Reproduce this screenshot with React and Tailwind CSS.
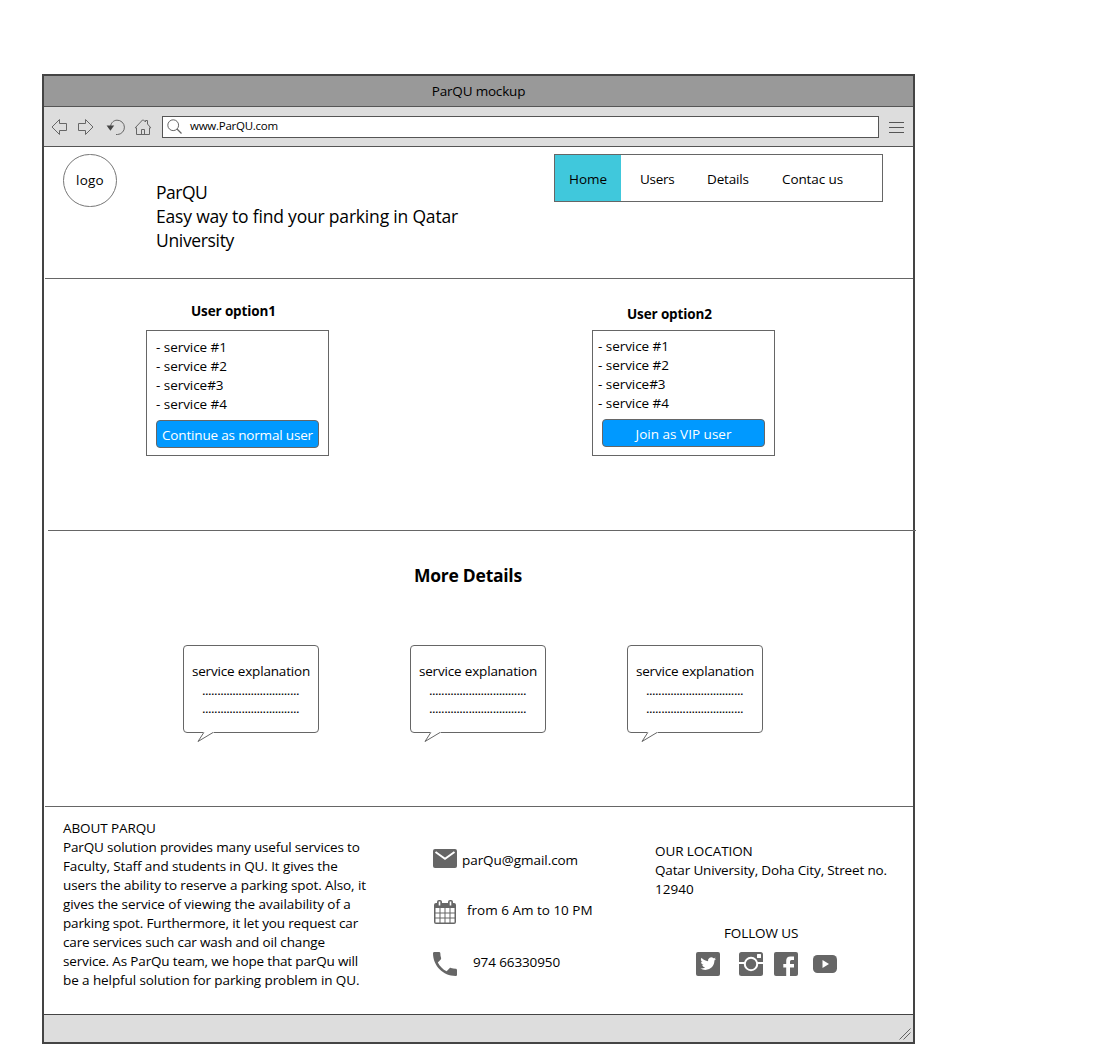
import React from "react";

const stroke = { fill: "none", stroke: "#666", strokeWidth: 1 };

function ToolbarIcons() {
  return (
    <div className="flex h-[18px] w-[118px] shrink-0 items-center">
      <svg className="ml-[7px] h-[18px] w-[18px] shrink-0" viewBox="0 0 18 18" {...stroke}>
        <path d="M1 9 L8.5 1.5 V5.5 H15.5 V12.5 H8.5 V16.5 Z" />
      </svg>
      <svg className="ml-[8px] h-[18px] w-[18px] shrink-0" viewBox="0 0 18 18" {...stroke}>
        <path d="M16 9 L8.5 1.5 V5.5 H1.5 V12.5 H8.5 V16.5 Z" />
      </svg>
      <svg className="ml-[11px] h-[18px] w-[20px] shrink-0" viewBox="0 0 20 18" {...stroke}>
        <path d="M4.5 8.5 C5 4.5 8 2.2 11 2.2 A7 7 0 0 1 11.5 16.5 H10" />
        <path d="M0.6 7.6 H8.2 L4.4 12.8 Z" fill="#444" stroke="none" />
      </svg>
      <svg className="ml-[8px] h-[18px] w-[18px] shrink-0" viewBox="0 0 18 18" {...stroke}>
        <path d="M1.2 9.8 L8.5 2 L9.5 2 L11.5 4 V2.5 H13.5 V6 L16.8 9.8 H15.5 V16.5 H2.5 V9.8 Z M7.5 16.5 V11.5 H10.5 V16.5" />
      </svg>
    </div>
  );
}

function OptionBox({ services, label, spacing, padding }) {
  return (
    <div className={"h-[126px] w-[183px] border border-[#666] " + padding}>
      <ul className="whitespace-pre leading-[19px] tracking-[-0.05px]">
        {services.map((s) => (
          <li key={s}>{s}</li>
        ))}
      </ul>
      <button
        className={
          "ml-auto mr-[9px] mt-[6px] block h-[28px] w-[163px] whitespace-nowrap rounded border border-[#666] bg-[#0099ff] pt-px text-center leading-[26px] text-white " +
          spacing
        }
      >
        {label}
      </button>
    </div>
  );
}

function Bubble({ margin }) {
  return (
    <div className={"relative h-[88px] w-[136px] rounded border border-[#666] pt-[16px] text-center " + margin}>
      <p className="whitespace-nowrap leading-[18px] tracking-[-0.17px]">service explanation</p>
      <p className="mt-px pr-px leading-[18px] tracking-[-0.515px]">................................</p>
      <p className="pr-px leading-[18px] tracking-[-0.515px]">................................</p>
      <svg className="absolute left-[13px] top-[85px] h-[12px] w-[18px]" viewBox="0 0 18 12">
        <path d="M6.5 0 H16.5 V2 H6.5 Z" fill="#fff" />
        <path d="M6.8 1.5 L1 10.5 L16 1.5" fill="#fff" stroke="#666" />
      </svg>
    </div>
  );
}

function MailIcon() {
  return (
    <svg className="h-[19px] w-6 shrink-0" viewBox="0 0 24 19">
      <rect width="24" height="19" rx="2" fill="#666" />
      <path d="M2.5 3 L12 9.8 L21.5 3" fill="none" stroke="#fff" strokeWidth="2" />
    </svg>
  );
}

function CalendarIcon() {
  return (
    <svg className="h-6 w-6 shrink-0" viewBox="0 0 24 24">
      <path d="M3 3 H21 Q23 3 23 5 V22 Q23 24 21 24 H3 Q1 24 1 22 V5 Q1 3 3 3 Z" fill="#666" />
      <rect x="4" y="0" width="5" height="7" rx="2" fill="#666" />
      <rect x="15" y="0" width="5" height="7" rx="2" fill="#666" />
      <path d="M6.5 1.5 V5.5 M17.5 1.5 V5.5" stroke="#fff" strokeWidth="1.6" />
      <path
        d="M2.5 8 h4 v4.5 h-4z M7.5 8 h4 v4.5 h-4z M12.5 8 h4 v4.5 h-4z M17.5 8 h4 v4.5 h-4z M2.5 13.5 h4 v4 h-4z M7.5 13.5 h4 v4 h-4z M12.5 13.5 h4 v4 h-4z M17.5 13.5 h4 v4 h-4z M2.5 18.5 h4 v4 h-4z M7.5 18.5 h4 v4 h-4z M12.5 18.5 h4 v4 h-4z M17.5 18.5 h4 v4 h-4z"
        fill="#fff"
      />
    </svg>
  );
}

function PhoneIcon() {
  return (
    <svg className="h-6 w-6 shrink-0" viewBox="3 3 18 18" fill="#666">
      <path d="M6.62 10.79c1.44 2.83 3.76 5.14 6.59 6.59l2.2-2.2c.27-.27.67-.36 1.02-.24 1.12.37 2.33.57 3.57.57.55 0 1 .45 1 1V20c0 .55-.45 1-1 1-9.39 0-17-7.61-17-17 0-.55.45-1 1-1h3.5c.55 0 1 .45 1 1 0 1.25.2 2.45.57 3.57.11.35.03.74-.25 1.02l-2.2 2.2z" />
    </svg>
  );
}

function SocialIcons() {
  return (
    <div className="ml-[41px] mt-[9px] flex items-center">
      <svg className="h-6 w-6" viewBox="0 0 24 24">
        <rect width="24" height="24" rx="2" fill="#666" />
        <g transform="translate(4.4 3.8) scale(0.65)">
          <path
            fill="#fff"
            d="M23.95 4.57a10 10 0 0 1-2.82.77 4.96 4.96 0 0 0 2.16-2.72c-.95.55-2 .95-3.13 1.18a4.92 4.92 0 0 0-8.38 4.48C7.69 8.1 4.07 6.13 1.64 3.16a4.92 4.92 0 0 0 1.52 6.57 4.9 4.9 0 0 1-2.23-.61v.06a4.92 4.92 0 0 0 3.95 4.83 5 5 0 0 1-2.21.08 4.94 4.94 0 0 0 4.6 3.42A9.87 9.87 0 0 1 0 19.54a13.99 13.99 0 0 0 7.55 2.21c9.05 0 14-7.5 14-13.98 0-.21 0-.42-.02-.63a9.94 9.94 0 0 0 2.42-2.57z"
          />
        </g>
      </svg>
      <svg className="ml-[19px] h-6 w-6" viewBox="0 0 24 24">
        <rect width="24" height="24" rx="2.5" fill="#666" />
        <path d="M0 11 H6 M18 11 H24" stroke="#fff" strokeWidth="2" />
        <circle cx="12" cy="12" r="6.2" fill="#666" stroke="#fff" strokeWidth="2" />
        <rect x="18" y="2" width="4" height="4" rx="0.5" fill="#fff" />
      </svg>
      <svg className="ml-[11px] h-6 w-6" viewBox="0 0 24 24">
        <rect width="24" height="24" rx="2" fill="#666" />
        <path d="M20 4.5 V8 H17.5 Q16 8 16 9.5 V12 H20 V15.5 H16 V24 H12.2 V15.5 H9.3 V12 H12.2 V8.8 Q12.2 4.5 16.5 4.5 Z" fill="#fff" />
      </svg>
      <svg className="ml-[15px] h-[18px] w-6" viewBox="0 0 24 18">
        <rect width="24" height="18" rx="4.5" fill="#666" />
        <path d="M9.5 5 L16 9 L9.5 13 Z" fill="#fff" />
      </svg>
    </div>
  );
}

const about = [
  ["ABOUT PARQU", "tracking-[-0.1px]"],
  ["ParQU solution provides many useful services to", "tracking-[-0.165px]"],
  ["Faculty, Staff and students in QU. It gives the", "tracking-[-0.11px]"],
  ["users the ability to reserve a parking spot. Also, it", "tracking-[-0.1px]"],
  ["gives the service of viewing the availability of a", "tracking-[-0.06px]"],
  ["parking spot. Furthermore, it let you request car", "tracking-[-0.15px]"],
  ["care services such car wash and oil change", "tracking-[-0.14px]"],
  ["service. As ParQu team, we hope that parQu will", "tracking-[-0.16px]"],
  ["be a helpful solution for parking problem in QU.", "tracking-[-0.09px]"],
];

export default function App() {
  return (
    <div className="h-[1044px] w-[1100px] overflow-hidden bg-white pl-[42px] pt-[74px] font-['Open_Sans',sans-serif] text-[13.5px] text-black">
      <div className="flex h-[970px] w-[873px] flex-col border-2 border-[#444]">
        <div className="h-[31px] shrink-0 border-b border-[#555] bg-[#999] text-center leading-[30px] tracking-[-0.19px]">
          ParQU mockup
        </div>

        <div className="flex h-[40px] shrink-0 items-center border-b border-[#555] bg-[#ddd] pt-px">
          <ToolbarIcons />
          <div className="flex h-[22px] w-[717px] items-center border border-[#555] bg-white">
            <svg className="ml-[4px] h-4 w-4" viewBox="0 0 16 16" {...stroke}>
              <circle cx="6.2" cy="6.2" r="5.4" />
              <path d="M10 10 L14.5 14.5" strokeWidth="1.3" />
            </svg>
            <span className="ml-[7px] pb-[2px] text-[11.5px] leading-[16px] tracking-[-0.25px]">www.ParQU.com</span>
          </div>
          <div className="ml-[10px] flex w-[15px] flex-col gap-[4px]">
            <span className="h-px bg-[#555]" />
            <span className="h-px bg-[#555]" />
            <span className="h-px bg-[#555]" />
          </div>
        </div>

        <header className="ml-px flex h-[132px] shrink-0 border-b border-[#666]">
          <div className="ml-[18px] mt-[7px] h-[53px] w-[54px] rounded-full border border-[#777] text-center leading-[50px] tracking-[0.2px]">
            logo
          </div>
          <div className="ml-[39px] mt-[33px] w-[398px] whitespace-nowrap text-[17.5px] leading-[24px]">
            <h1 className="tracking-[-0.5px]">ParQU</h1>
            <p className="tracking-[-0.19px]">Easy way to find your parking in Qatar</p>
            <p className="tracking-[-0.34px]">University</p>
          </div>
          <nav className="mt-[7px] flex h-[48px] w-[329px] whitespace-nowrap border border-[#666] leading-[49px]">
            <a className="w-[66px] bg-[#40c8dc] text-center">Home</a>
            <a className="ml-[19px] w-[67px] tracking-[-0.3px]">Users</a>
            <a className="w-[75px] tracking-[-0.15px]">Details</a>
            <a className="tracking-[-0.1px]">Contac us</a>
          </nav>
        </header>

        <section className="flex h-[251px] shrink-0 pl-[102px]">
          <div className="w-[446px]">
            <h2 className="mt-[23px] pl-[45px] font-bold leading-[19px] tracking-[-0.13px]">User option1</h2>
            <div className="mt-[9px]">
              <OptionBox
                services={["- service #1", "- service #2", "- service#3", "- service #4"]}
                label="Continue as normal user"
                spacing="tracking-[-0.17px]"
                padding="pt-[7px] pl-[9px]"
              />
            </div>
          </div>
          <div>
            <h2 className="mt-[26px] pl-[35px] font-bold leading-[19px] tracking-[-0.13px]">User option2</h2>
            <div className="mt-[6px]">
              <OptionBox
                services={["- service #1", "- service #2", "- service#3", "- service #4"]}
                label="Join as VIP user"
                spacing="tracking-[0.02px]"
                padding="pt-[6px] pl-[5px]"
              />
            </div>
          </div>
        </section>

        <section className="-mr-[3px] ml-[4px] h-[276px] shrink-0 border-t border-[#666]">
          <h2 className="ml-[366px] mt-[32px] text-[17.5px] font-bold leading-[24px] tracking-[-0.26px]">More Details</h2>
          <div className="mt-[58px] flex pl-[135px]">
            <Bubble margin="" />
            <Bubble margin="ml-[91px]" />
            <Bubble margin="ml-[81px]" />
          </div>
        </section>

        <footer className="ml-px flex h-[208px] shrink-0 whitespace-nowrap border-t border-[#666] leading-[19px]">
          <div className="ml-[18px] mt-[12px] w-[370px]">
            {about.map(([line, spacing]) => (
              <p key={line} className={spacing}>
                {line}
              </p>
            ))}
          </div>
          <div className="w-[222px]">
            <div className="mt-[42px] flex h-[19px]">
              <MailIcon />
              <span className="ml-[5px] mt-[2px] tracking-[-0.06px]">parQu@gmail.com</span>
            </div>
            <div className="mt-[32px] flex h-6">
              <CalendarIcon />
              <span className="ml-[10px] mt-[1px]">from 6 Am to 10 PM</span>
            </div>
            <div className="mt-[28px] flex h-6">
              <PhoneIcon />
              <span className="ml-[16px] mt-px tracking-[-0.12px]">974 66330950</span>
            </div>
          </div>
          <div>
            <p className="mt-[35px] tracking-[-0.08px]">OUR LOCATION</p>
            <p className="tracking-[-0.155px]">Qatar University, Doha City, Street no.</p>
            <p>12940</p>
            <p className="ml-[69px] mt-[25px] tracking-[-0.12px]">FOLLOW US</p>
            <SocialIcons />
          </div>
        </footer>

        <div className="flex flex-1 items-end justify-end border-t border-[#444] bg-[#ddd] pb-[2px] pr-[2px]">
          <svg className="h-[12px] w-[12px]" viewBox="0 0 12 12" fill="none" stroke="#555" strokeWidth="0.9">
            <path d="M0.5 11.5 L11.5 0.5 M4.5 11.5 L11.5 4.5" />
          </svg>
        </div>
      </div>
    </div>
  );
}
